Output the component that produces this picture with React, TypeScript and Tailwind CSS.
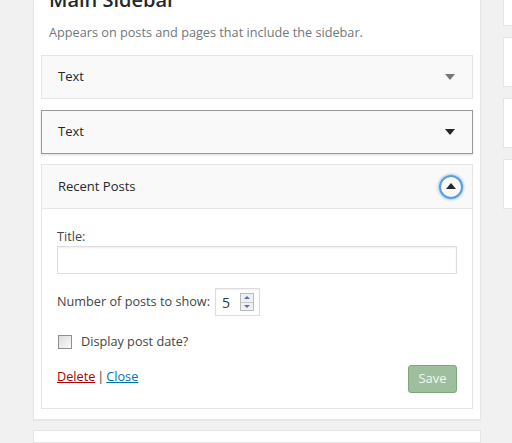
import React from "react";

const font = { fontFamily: '"Open Sans", "Noto Sans", sans-serif' };

function Arrow({ color = "#72777c" }: { color?: string }) {
  return (
    <svg width="10" height="6" viewBox="0 0 10 6" className="block">
      <polygon points="0,0 10,0 5,6" fill={color} />
    </svg>
  );
}

function CollapsedWidget({ title, hover = false }: { title: string; hover?: boolean }) {
  return (
    <div
      className={
        "flex h-[44px] items-center justify-between bg-[#f9f9f9] pl-[16px] pr-[17px] " +
        (hover ? "border border-[#999] shadow-[0_1px_2px_rgba(0,0,0,0.15)]" : "border border-[#e5e5e5]")
      }
    >
      <span className="text-[13px] font-medium text-[#23282d]">{title}</span>
      <Arrow color={hover ? "#23282d" : "#72777c"} />
    </div>
  );
}

function NumberSpinner() {
  return (
    <div className="flex h-[28px] w-[45px] items-center border border-[#ddd] bg-white pl-[6px] shadow-[inset_0_1px_2px_rgba(0,0,0,0.07)]">
      <span className="w-[18px] text-[14px] text-[#32373c]">5</span>
      <div className="flex h-[18px] w-[14px] flex-col border border-[#bbb]">
        <div className="flex flex-1 items-center justify-center bg-[#eef0f3]">
          <svg width="6" height="3" viewBox="0 0 6 3">
            <polygon points="0,3 6,3 3,0" fill="#5a6fa8" />
          </svg>
        </div>
        <div className="h-px bg-[#c8c8c8]" />
        <div className="flex flex-1 items-center justify-center bg-[#eef0f3]">
          <svg width="6" height="3" viewBox="0 0 6 3">
            <polygon points="0,0 6,0 3,3" fill="#5a6fa8" />
          </svg>
        </div>
      </div>
    </div>
  );
}

function RecentPostsWidget() {
  return (
    <div className="border border-[#e5e5e5] bg-white">
      <div className="flex h-[44px] items-center justify-between border-b border-[#e5e5e5] bg-[#f9f9f9] pl-[16px] pr-[9px]">
        <span className="text-[13px] font-medium text-[#23282d]">Recent Posts</span>
        <div className="flex h-[24px] w-[24px] items-center justify-center rounded-full border-2 border-[#5b9dd9] shadow-[0_0_3px_rgba(30,140,190,0.8)]">
          <svg width="10" height="6" viewBox="0 0 10 6" className="-mt-px">
            <polygon points="0,6 10,6 5,0" fill="#23282d" />
          </svg>
        </div>
      </div>
      <div className="px-[15px] pb-[15px] pt-[18px] text-[12.7px] text-[#444]">
        <div className="leading-[18px]">Title:</div>
        <div className="mt-px h-[28px] w-full border border-[#ddd] shadow-[inset_0_1px_2px_rgba(0,0,0,0.07)]" />
        <div className="mt-[14px] flex h-[28px] items-center gap-[5px]">
          <span>Number of posts to show:</span>
          <NumberSpinner />
        </div>
        <div className="mt-[17px] flex h-[18px] items-center">
          <div className="ml-px h-[14px] w-[14px] border border-[#8f8f8f] bg-gradient-to-br from-[#dcdcdc] to-[#fbfbfb]" />
          <span className="ml-[9px]">Display post date?</span>
        </div>
        <div className="mt-[14px] flex items-start justify-between">
          <div className="mt-[2px] leading-[18px]">
            <span className="text-[#a00] underline">Delete</span>
            <span className="mx-[2px] text-[#444]">|</span>
            <span className="text-[#0073aa] underline">Close</span>
          </div>
          <div className="flex h-[28px] w-[49px] items-center justify-center rounded-[3px] border border-[#7fa57f] bg-[#9dbf9d] text-[13px] text-[#f3f8f3]">
            Save
          </div>
        </div>
      </div>
    </div>
  );
}

export default function App() {
  return (
    <div className="flex h-[443px] w-[512px] overflow-hidden bg-[#f1f1f1]" style={font}>
      <div className="ml-[33px] flex w-[448px] shrink-0 flex-col">
        <div className="border border-t-0 border-[#e5e5e5] bg-white px-[7px] pb-[10px] shadow-[0_1px_1px_rgba(0,0,0,0.04)]">
          <div className="-mt-[10px] pl-[8px] text-[20px] font-semibold leading-[20px] text-[#23282d]">
            Main Sidebar
          </div>
          <div className="mt-[13px] pl-[8px] text-[12.7px] leading-[18px] text-[#72777c]">
            Appears on posts and pages that include the sidebar.
          </div>
          <div className="mt-[14px] flex flex-col gap-[11px]">
            <CollapsedWidget title="Text" />
            <CollapsedWidget title="Text" hover />
            <div className="-mt-px">
              <RecentPostsWidget />
            </div>
          </div>
        </div>
        <div className="mt-[10px] h-[40px] border border-[#e5e5e5] bg-white" />
      </div>
      <div className="ml-[22px] flex w-[200px] shrink-0 flex-col gap-[11px]">
        <div className="h-[26px] border border-t-0 border-[#e5e5e5] bg-white" />
        <div className="h-[50px] border border-[#e5e5e5] bg-white" />
        <div className="h-[50px] border border-[#e5e5e5] bg-white" />
        <div className="h-[50px] border border-[#e5e5e5] bg-white" />
      </div>
    </div>
  );
}
